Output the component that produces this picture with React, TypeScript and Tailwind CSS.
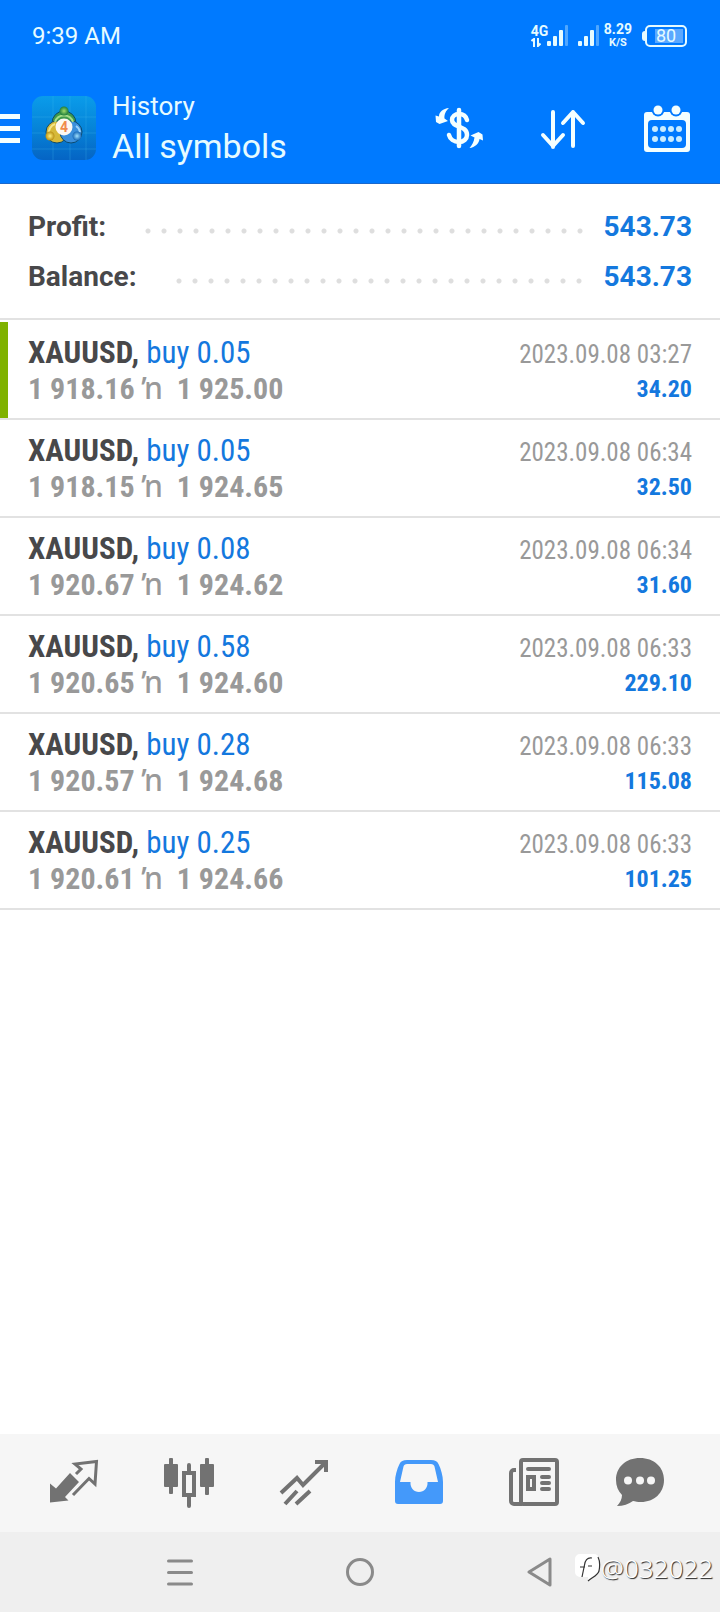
import React from 'react';

const deals = [
  { id: 1, symbol: 'XAUUSD', side: 'buy', volume: '0.05', open: '1 918.16', close: '1 925.00', time: '2023.09.08 03:27', profit: '34.20', marked: true },
  { id: 2, symbol: 'XAUUSD', side: 'buy', volume: '0.05', open: '1 918.15', close: '1 924.65', time: '2023.09.08 06:34', profit: '32.50' },
  { id: 3, symbol: 'XAUUSD', side: 'buy', volume: '0.08', open: '1 920.67', close: '1 924.62', time: '2023.09.08 06:34', profit: '31.60' },
  { id: 4, symbol: 'XAUUSD', side: 'buy', volume: '0.58', open: '1 920.65', close: '1 924.60', time: '2023.09.08 06:33', profit: '229.10' },
  { id: 5, symbol: 'XAUUSD', side: 'buy', volume: '0.28', open: '1 920.57', close: '1 924.68', time: '2023.09.08 06:33', profit: '115.08' },
  { id: 6, symbol: 'XAUUSD', side: 'buy', volume: '0.25', open: '1 920.61', close: '1 924.66', time: '2023.09.08 06:33', profit: '101.25' },
];

const totals = [
  { label: 'Profit:', value: '543.73' },
  { label: 'Balance:', value: '543.73' },
];

function SignalBars() {
  return (
    <svg width="22" height="22" viewBox="0 0 22 22" fill="#e6fbff">
      <rect x="0" y="16" width="4" height="5" rx="1" />
      <rect x="6" y="11" width="4" height="10" rx="1" />
      <rect x="12" y="5" width="4" height="16" rx="1" />
      <rect x="18" y="0" width="3" height="21" rx="1" opacity="0.35" />
    </svg>
  );
}

function StatusBar() {
  return (
    <div className="flex h-[72px] items-center justify-between pr-[33px] pl-8">
      <span className="text-2xl text-[#e6fbff]">9:39 AM</span>
      <div className="flex items-center text-[#e6fbff]">
        <div className="flex w-4 flex-col items-start">
          <span className="text-sm leading-3 font-bold">4G</span>
          <svg className="mt-px" width="10" height="9" viewBox="0 0 10 9" fill="none" stroke="#e6fbff" strokeWidth="2">
            <path d="M0.5 3L3 1V9M7 0V8L9.5 5.5" />
          </svg>
        </div>
        <SignalBars />
        <span className="w-[9px]" />
        <SignalBars />
        <div className="ml-1 flex flex-col items-center font-bold">
          <span className="text-sm leading-[13px]">8.29</span>
          <span className="text-[11px] leading-[13px]">K/S</span>
        </div>
        <div className="ml-2.5 flex items-center">
          <span className="h-2.5 w-[3px] rounded-l-sm bg-[#e6fbff]" />
          <div className="flex h-[22px] w-[42px] items-center justify-center rounded-[5px] border-2 border-[#e6fbff] bg-[linear-gradient(#5aa8ff,#5aa8ff)] bg-[length:28px_14px] bg-[position:8px_2px] bg-no-repeat text-lg leading-4">
            80
          </div>
        </div>
      </div>
    </div>
  );
}

function AppLogo() {
  return (
    <svg width="64" height="64" viewBox="0 0 64 64">
      <defs>
        <linearGradient id="tile" x1="0" y1="0" x2="0" y2="1">
          <stop offset="0" stopColor="#0a9cea" />
          <stop offset="0.5" stopColor="#0684d8" />
          <stop offset="1" stopColor="#0564c4" />
        </linearGradient>
        <radialGradient id="green"><stop offset="0" stopColor="#9fdc6a" /><stop offset="1" stopColor="#1f7d3c" /></radialGradient>
        <radialGradient id="gold"><stop offset="0" stopColor="#fff07a" /><stop offset="1" stopColor="#b98f12" /></radialGradient>
        <radialGradient id="sky"><stop offset="0" stopColor="#9fe0ff" /><stop offset="1" stopColor="#1668b8" /></radialGradient>
      </defs>
      <rect width="64" height="64" rx="11" fill="url(#tile)" />
      <path d="M0 21H64M0 37H64M0 53H64M21 0V64M38 0V64M54 0V64" stroke="#4cc3ee" strokeOpacity="0.25" />
      <g stroke="#0b4a6e" strokeWidth="1">
        <circle cx="32" cy="27" r="12" fill="#3f9a4b" />
        <circle cx="25" cy="36" r="11" fill="#d6b93a" />
        <circle cx="39" cy="36" r="11" fill="#3b8fdc" />
      </g>
      <path d="M23 26a9.5 9.5 0 0 1 18 0" fill="none" stroke="#a4dc86" strokeWidth="2" />
      <path d="M17 38a9 9 0 0 1 6-10" fill="none" stroke="#f4e58a" strokeWidth="2" />
      <path d="M44 30a9 9 0 0 1 4 6" fill="none" stroke="#9bd2fa" strokeWidth="2" />
      <circle cx="32" cy="15" r="4.5" fill="url(#green)" />
      <circle cx="18" cy="40" r="4.5" fill="url(#gold)" />
      <circle cx="45" cy="40" r="4.5" fill="url(#sky)" />
      <circle cx="32" cy="31" r="8.5" fill="#fdf8f2" />
      <text x="32" y="36" textAnchor="middle" fontSize="14" fontWeight="700" fill="#f08a4b">4</text>
    </svg>
  );
}

function CurrencyIcon() {
  return (
    <svg width="48" height="48" viewBox="0 0 48 48" fill="none" stroke="#f4ffff">
      <path d="M32 16C31 12 28 10 24 10c-4 0-7 2.500-7 6C17 24 32 21 32 31c0 4-3.500 7-8 7-5 0-9-3-10-7" strokeWidth="4.5" strokeLinecap="round" />
      <path d="M24 6v36" strokeWidth="4.5" strokeLinecap="round" />
      <path d="M14 4C8 4.500 4 8 4 12.500L0.500 11.500 1 18l3.500 2 8.500-3-3.500-2.500C9 10.500 11 6.500 14 4Z" fill="#f4ffff" stroke="none" />
      <path d="M34.500 44C40 43.500 44 39.500 44.500 35L48 36.500 47.500 30.500 43.500 28 35.500 31.500 39.500 33.500C39 37.500 37 41.500 34.500 44Z" fill="#f4ffff" stroke="none" />
    </svg>
  );
}

function SortIcon() {
  return (
    <svg width="48" height="48" viewBox="0 0 48 48" fill="none" stroke="#f4ffff" strokeWidth="4" strokeLinecap="round" strokeLinejoin="round">
      <path d="M14 8V43M4 31L14 42 24 31" />
      <path d="M34 42V8M24 19L34 8 44 19" />
    </svg>
  );
}

function CalendarIcon() {
  return (
    <svg width="48" height="48" viewBox="0 0 48 48">
      <path d="M4 8H44a3 3 0 0 1 3 3V45a3 3 0 0 1-3 3H4a3 3 0 0 1-3-3V11a3 3 0 0 1 3-3Z" fill="#f4ffff" />
      <rect x="5" y="16" width="38" height="28" rx="4" fill="#007aff" />
      <circle cx="15" cy="6" r="6.5" fill="#007aff" />
      <circle cx="33" cy="6" r="6.5" fill="#007aff" />
      <circle cx="15" cy="6" r="4.5" fill="#f4ffff" />
      <circle cx="33" cy="6" r="4.5" fill="#f4ffff" />
      {[25, 35].map((y) =>
        [12, 20, 28, 36].map((x) => <circle key={`${x}-${y}`} cx={x} cy={y} r="3" fill="#c8ecff" />)
      )}
    </svg>
  );
}

function Toolbar() {
  return (
    <div className="flex h-[111px] items-center pr-[29px]">
      <button aria-label="Menu" className="flex w-5 flex-col gap-[7px] pt-0.5">
        <span className="h-[5px] bg-[#f4ffff]" />
        <span className="h-[5px] bg-[#f4ffff]" />
        <span className="h-[5px] bg-[#f4ffff]" />
      </button>
      <span className="ml-3">
        <AppLogo />
      </span>
      <div className="ml-4 flex flex-1 flex-col text-[#e6fbff]">
        <span className="text-[26px] leading-9">History</span>
        <h1 className="text-[34px] leading-[44px]">All symbols</h1>
      </div>
      <div className="flex gap-14">
        <button aria-label="Currency"><CurrencyIcon /></button>
        <button aria-label="Sort"><SortIcon /></button>
        <button aria-label="Period"><CalendarIcon /></button>
      </div>
    </div>
  );
}

function TradeIcon() {
  return (
    <svg width="52" height="52" viewBox="0 0 52 52">
      <path d="M2 25.500L8 30.500 22 15 31 24 17 39 20.500 42.500 2 44.500Z" fill="#727272" />
      <path d="M28 16L33 11 27 6 48.500 3.500 47 26 41 20.500 25 37" fill="none" stroke="#727272" strokeWidth="3" />
    </svg>
  );
}

function CandlesIcon() {
  return (
    <svg width="52" height="52" viewBox="0 0 52 52" fill="#727272">
      <rect x="6" y="0" width="4" height="36" rx="1" />
      <rect x="1" y="6" width="14" height="23" rx="1" />
      <rect x="42" y="0" width="4" height="37" rx="1" />
      <rect x="37" y="6" width="14" height="23" rx="1" />
      <path d="M24 7a2 2 0 0 1 4 0V13H24ZM24 38H28V48a2 2 0 0 1-4 0Z" />
      <rect x="21" y="15" width="10" height="22" fill="none" stroke="#727272" strokeWidth="4" />
    </svg>
  );
}

function TrendIcon() {
  return (
    <svg width="52" height="52" viewBox="0 0 52 52" fill="none" stroke="#727272" strokeWidth="4">
      <path d="M3 35L19 20 25 27 47 5M37 4H48V14M7 46L19 33M18 46L32 33" />
    </svg>
  );
}

function InboxIcon() {
  return (
    <svg width="52" height="52" viewBox="0 0 52 52">
      <path fillRule="evenodd" d="M14 2H38C42 2 44 3 45.500 6C48 11 50 18 50 24V43a3 3 0 0 1-3 3H5a3 3 0 0 1-3-3V24C2 18 4 11 6.500 6C8 3 10 2 14 2ZM14 6C12 6 11 7 10.500 8.500L7 24H17.500C17 30 21 34 26 34S35 30 34.500 24H45L41.500 8.500C41 7 40 6 38 6Z" fill="#4499fa" />
    </svg>
  );
}

function NewsIcon() {
  return (
    <svg width="52" height="52" viewBox="0 0 52 52" fill="none" stroke="#727272" strokeWidth="4">
      <rect x="13" y="2" width="36" height="44" rx="2" />
      <path d="M8 12H6a3 3 0 0 0-3 3V43a3 3 0 0 0 3 3H14" />
      <path d="M20 11H41M34 19H41M34 25H41M34 31H41" strokeLinecap="round" />
      <rect x="20" y="19" width="6" height="12" />
    </svg>
  );
}

function ChatIcon() {
  return (
    <svg width="52" height="52" viewBox="0 0 52 52">
      <path d="M26 0C40 0 50 9 50 22S40 44 27 44C24 44 21 43.500 19 43 15 46 9 48 3 48 6 45 8 41 8 37 4 33 2 28 2 22 2 9 12 0 26 0Z" fill="#727272" />
      <circle cx="14" cy="22.5" r="4" fill="#f6f6f6" />
      <circle cx="26" cy="22.5" r="4" fill="#f6f6f6" />
      <circle cx="37" cy="22.5" r="4" fill="#f6f6f6" />
    </svg>
  );
}

const tabs = [
  { name: 'Quotes', icon: TradeIcon },
  { name: 'Charts', icon: CandlesIcon },
  { name: 'Trade', icon: TrendIcon },
  { name: 'History', icon: InboxIcon },
  { name: 'News', icon: NewsIcon },
  { name: 'Messages', icon: ChatIcon },
];

export default function App() {
  return (
    <div className="flex min-h-screen flex-col bg-white font-[Roboto,'Liberation_Sans',sans-serif]">
      <header className="border-b border-[#1a68cc] bg-[#007aff]">
        <StatusBar />
        <Toolbar />
      </header>

      <main className="flex-1">
        <dl className="border-b-2 border-[#e2e2e2] px-7 pt-[18px] pb-4">
          {totals.map((t) => (
            <div key={t.label} className="flex h-[50px] items-center text-[28px] font-bold">
              <dt className="text-[#48484a]">{t.label}</dt>
              <dd className="flex flex-1 items-center text-[#1478de]">
                <span className="mt-2 mr-4 ml-[34px] h-4 flex-1 bg-[radial-gradient(circle,#dedede_2px,transparent_3px)] bg-[length:16px_16px] bg-repeat-x" />
                {t.value}
              </dd>
            </div>
          ))}
        </dl>

        <ul className="pt-0.5 font-['Roboto_Condensed',Roboto,'Liberation_Sans_Narrow',sans-serif]">
          {deals.map((d) => (
            <li key={d.id} className="relative flex h-[98px] items-center justify-between border-b-2 border-[#e2e2e2] px-7">
              {d.marked && <span className="absolute inset-y-0 left-0 w-2 bg-[#7fb200]" />}
              <div>
                <p className="text-[31px] leading-[35px] text-[#1478de]">
                  <span className="font-bold text-[#48484a]">{d.symbol},</span> {d.side} {d.volume}
                </p>
                <p className="text-[30px] leading-[35px] font-bold text-[#999]">
                  {d.open} <span className="font-['Noto_Sans'] font-medium">ŉ</span>&nbsp; {d.close}
                </p>
              </div>
              <div className="mt-1 text-right">
                <p className="text-[25px] leading-[35px] text-[#999]">{d.time}</p>
                <p className="text-2xl leading-[35px] font-bold text-[#1478de]">{d.profit}</p>
              </div>
            </li>
          ))}
        </ul>
      </main>

      <nav className="grid h-[98px] grid-cols-[repeat(5,115fr)_97fr] items-center bg-[#f6f6f6] pt-0.5 pr-8 pl-4">
        {tabs.map(({ name, icon: Icon }) => (
          <button key={name} aria-label={name} className="flex justify-center">
            <Icon />
          </button>
        ))}
      </nav>

      <footer className="relative grid h-20 grid-cols-3 items-center justify-items-center bg-[#efefef] px-[90px]">
        <button aria-label="Recent apps">
          <svg width="30" height="30" viewBox="0 0 30 30" stroke="#8a8a8a" strokeWidth="3" strokeLinecap="round">
            <path d="M3.500 4H26.500M3.500 15.500H26.500M3.500 27H26.500" />
          </svg>
        </button>
        <button aria-label="Home">
          <svg width="30" height="30" viewBox="0 0 30 30" fill="none" stroke="#8a8a8a" strokeWidth="3">
            <circle cx="15" cy="15" r="12.5" />
          </svg>
        </button>
        <button aria-label="Back">
          <svg width="30" height="30" viewBox="0 0 30 30" fill="none" stroke="#8a8a8a" strokeWidth="3" strokeLinejoin="round">
            <path d="M25 2V28L4 15Z" />
          </svg>
        </button>
        <div className="absolute top-5 right-[7px] flex items-center">
          <svg width="26" height="30" viewBox="0 0 26 30">
            <path d="M5 1H19a5 5 0 0 1 5 5V18C24 23 19 24 13 28V24H5a5 5 0 0 1-5-5V6a5 5 0 0 1 5-5Z" fill="#fff" />
            <path d="M23 4C25 8 25 13 24 18C23 22 18 24 13 28M17 5C12 4 10 8 9.500 12L7 24M5 14H10M13 13H17" fill="none" stroke="#333" strokeWidth="1.2" />
          </svg>
          <span className="font-['Noto_Sans'] text-[26px] leading-8 font-light text-white [text-shadow:1px_1px_1px_#222]">@032022</span>
        </div>
      </footer>
    </div>
  );
}
